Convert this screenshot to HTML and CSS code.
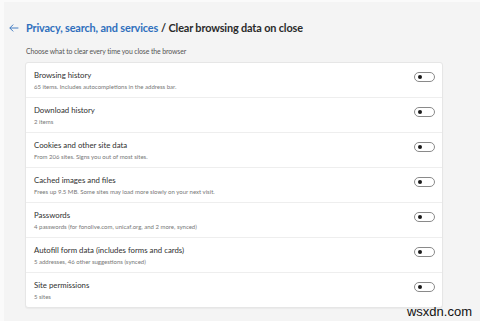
FILE: index.html
```html
<!DOCTYPE html>
<html lang="en">
<head>
  <meta charset="UTF-8">
  <title>Clear browsing data on close</title>
  <link rel="stylesheet" href="styles.css">
</head>
<body>
<div class="page">
  <h2 class="heading">
    <span class="back">
      <svg width="10" height="8" viewBox="0 0 10 8"><path d="M4.2 0.6 L0.8 4 L4.2 7.4 M0.8 4 H9.4" fill="none" stroke="#2f6fbd" stroke-width="0.9"/></svg>
    </span>
    <a class="crumb">Privacy, search, and services</a>
    <span class="current">/ Clear browsing data on close</span>
  </h2>

  <p class="intro">Choose what to clear every time you close the browser</p>

  <div class="card">
    <div class="row">
      <div class="text">
        <div class="title">Browsing history</div>
        <div class="desc">65 items. Includes autocompletions in the address bar.</div>
      </div>
      <span class="toggle"></span>
    </div>
    <div class="row">
      <div class="text">
        <div class="title">Download history</div>
        <div class="desc">2 items</div>
      </div>
      <span class="toggle"></span>
    </div>
    <div class="row">
      <div class="text">
        <div class="title">Cookies and other site data</div>
        <div class="desc">From 206 sites. Signs you out of most sites.</div>
      </div>
      <span class="toggle"></span>
    </div>
    <div class="row">
      <div class="text">
        <div class="title">Cached images and files</div>
        <div class="desc">Frees up 9.5 MB. Some sites may load more slowly on your next visit.</div>
      </div>
      <span class="toggle"></span>
    </div>
    <div class="row">
      <div class="text">
        <div class="title">Passwords</div>
        <div class="desc">4 passwords (for fonolive.com, unicaf.org, and 2 more, synced)</div>
      </div>
      <span class="toggle"></span>
    </div>
    <div class="row">
      <div class="text">
        <div class="title">Autofill form data (includes forms and cards)</div>
        <div class="desc">5 addresses, 46 other suggestions (synced)</div>
      </div>
      <span class="toggle"></span>
    </div>
    <div class="row">
      <div class="text">
        <div class="title">Site permissions</div>
        <div class="desc">5 sites</div>
      </div>
      <span class="toggle"></span>
    </div>
  </div>
</div>

<div class="watermark">wsxdn.com</div>
</body>
</html>
```

FILE: styles.css
```css
html, body {
  margin: 0;
  height: 100%;
}

body {
  position: relative;
  overflow: hidden;
  background: #f4f4f4;
  font-family: 'Lato', 'Open Sans', sans-serif;
  color: #262626;
  border-top: 2px solid #fafafa;
  border-left: 4px solid #fafafa;
  box-sizing: border-box;
}

.page {
  padding: 18px 0 0 5px;
}

.heading {
  display: flex;
  align-items: center;
  margin: 0;
  font-size: 10.9px;
  font-weight: 700;
  letter-spacing: -0.15px;
  line-height: 16px;
}

.back {
  display: flex;
  width: 17px;
}

.crumb {
  color: #2f6fbd;
  margin-right: 3px;
}

.current {
  color: #2a2a2a;
}

.intro {
  margin: 10px 0 0 17px;
  font-size: 6.9px;
  letter-spacing: -0.1px;
  line-height: 10px;
  color: #555555;
}

.card {
  width: 416px;
  margin: 6px 0 0 16px;
  background: #ffffff;
  border: 1px solid #e6e6e6;
  border-radius: 3px;
  box-shadow: 0 1px 1px rgba(0, 0, 0, 0.04);
}

.row {
  display: flex;
  align-items: center;
  height: 35px;
  padding: 0 7px 0 8px;
  border-top: 1px solid #eeeeee;
  box-sizing: border-box;
}

.row:first-child {
  border-top: 0;
  height: 34px;
}

.text {
  flex: 1;
}

.title {
  font-size: 7.8px;
  line-height: 11px;
  color: #303030;
}

.desc {
  margin-top: 1px;
  font-size: 6px;
  line-height: 9px;
  color: #777777;
}

.toggle {
  position: relative;
  width: 19px;
  height: 8px;
  border: 1px solid #8a8a8a;
  border-radius: 6px;
  margin-top: -6px;
}

.toggle::after {
  content: '';
  position: absolute;
  left: 3px;
  top: 2px;
  width: 4px;
  height: 4px;
  border-radius: 50%;
  background: #1a1a1a;
}

.watermark {
  position: absolute;
  right: 8px;
  bottom: 2px;
  font-family: 'Liberation Sans', Arial, sans-serif;
  font-size: 13px;
  color: #111111;
}
```
